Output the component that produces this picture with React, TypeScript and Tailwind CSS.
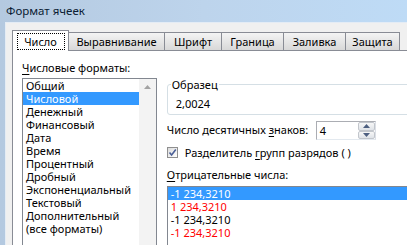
import React from "react";

const formats = [
  "Общий",
  "Числовой",
  "Денежный",
  "Финансовый",
  "Дата",
  "Время",
  "Процентный",
  "Дробный",
  "Экспоненциальный",
  "Текстовый",
  "Дополнительный",
  "(все форматы)",
];

const negatives = [
  { text: "-1 234,3210", red: false },
  { text: "1 234,3210", red: true },
  { text: "-1 234,3210", red: false },
  { text: "-1 234,3210", red: true },
];

const tabs = [
  { label: "Выравнивание", w: "w-[97px]" },
  { label: "Шрифт", w: "w-[58px]" },
  { label: "Граница", w: "w-[63px]" },
  { label: "Заливка", w: "w-[63px]" },
  { label: "Защита", w: "w-[55px]" },
];

const SpinArrow: React.FC<{ up?: boolean }> = ({ up }) => (
  <svg width="7" height="4" viewBox="0 0 7 4">
    <path d={up ? "M0 4 L3.5 0 L7 4 Z" : "M0 0 L3.5 4 L7 0 Z"} fill="#4d5f80" />
  </svg>
);

export default function App() {
  return (
    <div className="w-[407px] h-[245px] overflow-hidden flex flex-col bg-gradient-to-r from-[#b4c9e0] via-[#bdd4ec] to-[#bedbf6] font-['Noto_Sans',sans-serif] text-[11px] text-black">
      {/* title bar */}
      <div className="h-[22px] shrink-0 flex items-center pl-[6px] text-[11.5px] text-[#0b1c33]">
        Формат ячеек
      </div>

      {/* client area */}
      <div className="shrink-0 h-[260px] w-[460px] ml-[5px] bg-[#f0f0f0] border-l border-t border-[#e4ecf5] flex flex-col pl-[6px] pt-[7px]">
        {/* tabs */}
        <div className="flex items-end h-[20px]">
          <div className="relative z-10 -mb-px w-[57px] h-[21px] bg-white border-l border-t border-r border-[#898c95] flex justify-center pt-[2px]">
            <span className="w-[48px] h-[17px] border border-dotted border-black flex items-center justify-center leading-none">
              Число
            </span>
          </div>
          {tabs.map((t) => (
            <div
              key={t.label}
              className={`-ml-px ${t.w} h-[18px] border-l border-t border-r border-[#898c95] bg-gradient-to-b from-[#f4f4f4] to-[#d8d8d8] flex items-center justify-center leading-none`}
            >
              {t.label}
            </div>
          ))}
        </div>

        {/* panel */}
        <div className="flex-1 bg-white border border-[#898c95] flex pl-[9px] pt-[9px]">
          {/* left column */}
          <div className="w-[136px] flex flex-col">
            <div className="h-[15px] leading-[15px]">
              <span className="underline underline-offset-2">Ч</span>исловые форматы:
            </div>
            <div className="mt-[3px] h-[200px] border border-[#828790] flex">
              <div className="flex-1 flex flex-col">
                {formats.map((f, i) => (
                  <div
                    key={f}
                    className={`h-[13px] leading-[13px] pl-[3px] whitespace-nowrap ${
                      i === 1 ? "bg-[#3399ff] text-white" : ""
                    }`}
                  >
                    {f}
                  </div>
                ))}
              </div>
              <div className="w-[17px] bg-[#f3f3f3] flex justify-center pt-[6px]">
                <svg width="7" height="4" viewBox="0 0 7 4">
                  <path d="M0 4 L3.5 0 L7 4 Z" fill="#a3a3a3" />
                </svg>
              </div>
            </div>
          </div>

          {/* right column */}
          <div className="ml-[10px] w-[300px] flex flex-col">
            <fieldset className="mt-[17px] h-[38px] border border-[#d5dfe5] rounded-[3px]">
              <legend className="ml-[3px] px-[1px] leading-[15px]">Образец</legend>
              <div className="pl-[8px] pt-[4px] leading-[15px]">2,0024</div>
            </fieldset>

            <div className="mt-[6px] h-[19px] flex items-center">
              <div className="w-[149px] whitespace-nowrap">
                Число десятичных <span className="underline underline-offset-2">з</span>наков:
              </div>
              <div className="w-[60px] h-[19px] border border-[#abadb3] border-b-[#e3e9ef] border-r-[#dbdfe6] flex items-center">
                <span className="flex-1 pl-[3px] leading-none">4</span>
                <div className="w-[17px] h-full flex flex-col">
                  <div className="flex-1 rounded-[2px] border border-[#c2c6cc] bg-gradient-to-b from-[#f7f7f7] to-[#dfe3e8] flex items-center justify-center">
                    <SpinArrow up />
                  </div>
                  <div className="flex-1 rounded-[2px] border border-[#c2c6cc] bg-gradient-to-b from-[#f7f7f7] to-[#dfe3e8] flex items-center justify-center">
                    <SpinArrow />
                  </div>
                </div>
              </div>
            </div>

            <div className="mt-[6px] h-[13px] flex items-center">
              <div className="w-[11px] h-[11px] border border-[#8f8f8f] bg-gradient-to-br from-[#dcdcdc] to-white flex items-center justify-center">
                <svg width="9" height="9" viewBox="0 0 9 9">
                  <path d="M1.5 4.5 L3.6 7 L7.8 1.5" stroke="#4a5f97" strokeWidth="1.6" fill="none" />
                </svg>
              </div>
              <span className="ml-[7px] whitespace-nowrap leading-none">
                Разделитель <span className="underline underline-offset-2">г</span>рупп разрядов ( )
              </span>
            </div>

            <div className="mt-[8px] h-[15px] leading-[15px]">
              <span className="underline underline-offset-2">О</span>трицательные числа:
            </div>
            <div className="mt-[4px] h-[80px] w-[280px] border border-[#828790] flex flex-col">
              {negatives.map((n, i) => (
                <div
                  key={i}
                  className={`h-[13px] leading-[13px] pl-[3px] whitespace-nowrap ${
                    i === 0 ? "bg-[#3399ff] text-white" : n.red ? "text-[#ff0000]" : "text-black"
                  }`}
                >
                  {n.text}
                </div>
              ))}
            </div>
          </div>
        </div>
      </div>
    </div>
  );
}
